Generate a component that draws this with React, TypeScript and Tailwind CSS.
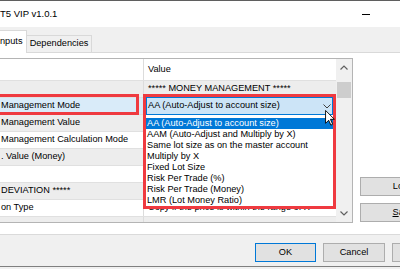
import React from "react";

const rows: { l: string; r: string; sel?: boolean }[] = [
  { l: "", r: "***** MONEY MANAGEMENT *****" },
  { l: "Management Mode", r: "AA (Auto-Adjust to account size)", sel: true },
  { l: "Management Value", r: "" },
  { l: "Management Calculation Mode", r: "" },
  { l: ". Value (Money)", r: "" },
  { l: "", r: "" },
  { l: "DEVIATION *****", r: "" },
  { l: "on Type", r: "Copy if the price is within the range of X" },
  { l: "", r: "" },
];

const items = [
  "AA (Auto-Adjust to account size)",
  "AAM (Auto-Adjust and Multiply by X)",
  "Same lot size as on the master account",
  "Multiply by X",
  "Fixed Lot Size",
  "Risk Per Trade (%)",
  "Risk Per Trade (Money)",
  "LMR (Lot Money Ratio)",
];

export default function App() {
  return (
    <div className="relative w-[400px] h-[269px] overflow-hidden bg-[#f0f0f0] font-['Liberation_Sans',Arial,sans-serif] text-[9.2px] leading-none text-black">
      {/* title bar */}
      <div className="h-[27px] bg-white border-t border-[#5f5f5f] flex items-center">
        <span className="text-[9.5px] whitespace-nowrap">T5 VIP v1.0.1</span>
        <div className="ml-auto mr-[30px] w-[8px] h-px bg-black" />
      </div>

      {/* tabs */}
      <div className="h-[26px] bg-[#f0f0f0] border-b border-[#d9d9d9] flex items-end">
        <div className="relative z-10 -mb-px w-[27px] h-[23px] bg-white border-t border-r border-[#d9d9d9] flex items-center">
          <span className="whitespace-nowrap">nputs</span>
        </div>
        <div className="w-[65px] h-[17px] border-t border-r border-[#d9d9d9] flex items-center justify-center">
          <span className="whitespace-nowrap">Dependencies</span>
        </div>
      </div>

      {/* panel */}
      <div className="h-[181px] bg-white flex">
        <div className="pt-[5px]">
          <div className="w-[353px] h-[165px] border-t border-r border-b border-[#b4b4b4] flex">
            <div className="w-[336px] flex flex-col overflow-hidden">
              <div className="h-[21px] flex shrink-0">
                <div className="w-[144px] border-r border-[#dcdcdc]" />
                <div className="flex-1 pl-[4px] flex items-center">Value</div>
              </div>
              {rows.map((row, i) => (
                <div
                  key={i}
                  className={`h-[17px] shrink-0 border-t border-[#e0e0e0] flex ${
                    i % 2 === 0 ? "bg-[#ededed]" : "bg-white"
                  }`}
                >
                  <div
                    className={`w-[144px] shrink-0 border-r border-[#dcdcdc] pl-[1px] flex items-center whitespace-nowrap overflow-hidden ${
                      row.sel ? "bg-[#d9ebf9]" : ""
                    }`}
                  >
                    {row.l}
                  </div>
                  <div className="flex-1 pl-[4px] flex items-center whitespace-nowrap overflow-hidden">
                    {row.r}
                  </div>
                </div>
              ))}
            </div>
            {/* scrollbar */}
            <div className="w-[16px] bg-[#f0f0f0] flex flex-col">
              <div className="h-[17px] flex items-center justify-center">
                <svg width="8" height="5" viewBox="0 0 8 5">
                  <polyline points="0.5,4.5 4,1 7.5,4.5" fill="none" stroke="#606060" strokeWidth="1.2" />
                </svg>
              </div>
              <div className="mt-[6px] mx-px h-[16px] bg-[#cdcdcd]" />
              <div className="flex-1" />
              <div className="h-[17px] flex items-center justify-center">
                <svg width="8" height="5" viewBox="0 0 8 5">
                  <polyline points="0.5,0.5 4,4 7.5,0.5" fill="none" stroke="#606060" strokeWidth="1.2" />
                </svg>
              </div>
            </div>
          </div>
        </div>
        <div className="pl-[7px] pt-[124px] flex flex-col gap-[7px]">
          <div className="w-[86px] h-[19px] shrink-0 bg-[#e1e1e1] border border-[#adadad] flex items-center justify-center">
            Load
          </div>
          <div className="w-[86px] h-[19px] shrink-0 bg-[#e1e1e1] border border-[#adadad] flex items-center justify-center">
            <span>
              <span className="underline">S</span>ave
            </span>
          </div>
        </div>
      </div>

      {/* bottom buttons */}
      <div className="h-[33px] bg-[#f0f0f0] border-t border-[#dadada] border-b border-b-[#7f7f7f] flex items-start pt-[8px] pl-[255px] gap-[7px]">
        <div className="w-[61px] h-[19px] shrink-0 bg-[#e1e1e1] border border-[#0078d7] flex items-center justify-center">
          OK
        </div>
        <div className="w-[62px] h-[19px] shrink-0 bg-[#e1e1e1] border border-[#adadad] flex items-center justify-center">
          Cancel
        </div>
        <div className="w-[62px] h-[19px] shrink-0 bg-[#e1e1e1] border border-[#adadad]" />
      </div>

      {/* combobox */}
      <div className="absolute left-[146px] top-[97px] w-[187px] h-[18px] bg-[#cce4f7] border border-[#0078d7] flex items-center pl-[1px] whitespace-nowrap">
        AA (Auto-Adjust to account size)
        <svg className="absolute right-[1px] top-[6px]" width="8" height="5" viewBox="0 0 8 5">
          <polyline points="0.5,0.5 4,4 7.5,0.5" fill="none" stroke="#404040" strokeWidth="1" />
        </svg>
      </div>

      {/* dropdown list */}
      <div className="absolute left-[146px] top-[115px] w-[187px] h-[92px] bg-white pt-[2.7px] flex flex-col overflow-hidden">
        {items.map((t, i) => (
          <div
            key={t}
            className={`h-[11.1px] shrink-0 flex items-center pl-[1px] whitespace-nowrap ${
              i === 0 ? "bg-[#0078d7] text-white" : ""
            }`}
          >
            {t}
          </div>
        ))}
      </div>

      {/* red highlight boxes */}
      <div className="absolute left-[-3px] top-[94px] w-[142px] h-[21px] border-[3px] border-[#ef3a40]" />
      <div className="absolute left-[143px] top-[94px] w-[193px] h-[115px] border-[3px] border-[#ef3a40]" />

      {/* mouse cursor */}
      <svg className="absolute left-[325px] top-[110px]" width="10" height="16" viewBox="0 0 11 18">
        <path d="M0.5,0.5 L0.5,15 L4,11.5 L6.5,17 L8.5,16 L6,10.5 L10.5,10.5 Z" fill="white" stroke="black" strokeWidth="1" strokeLinejoin="miter" />
      </svg>
    </div>
  );
}
